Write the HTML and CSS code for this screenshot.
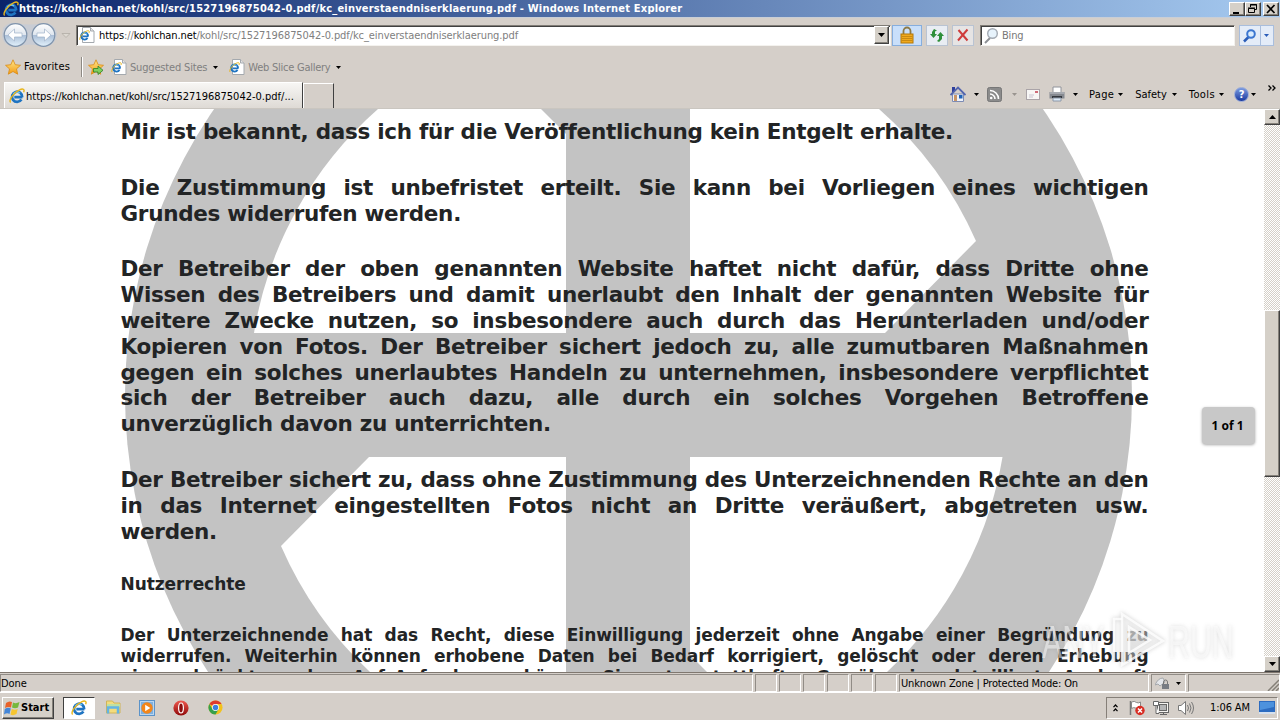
FILE: index.html
```html
<!DOCTYPE html>
<html lang="de">
<head>
<meta charset="utf-8">
<title>kc_einverstaendniserklaerung.pdf - Windows Internet Explorer</title>
<link rel="stylesheet" href="styles.css">
</head>
<body>
<svg class="defs" width="0" height="0" aria-hidden="true">
  <defs>
    <linearGradient id="gball" x1="0" y1="0" x2="0" y2="1"><stop offset="0" stop-color="#fff"/><stop offset=".48" stop-color="#dfe6ee"/><stop offset=".5" stop-color="#a9bdd6"/><stop offset="1" stop-color="#e2f1fb"/></linearGradient>
    <linearGradient id="gstar" x1="0" y1="0" x2="0" y2="1"><stop offset="0" stop-color="#ffe88a"/><stop offset="1" stop-color="#f39a12"/></linearGradient>
    <linearGradient id="gred" x1="0" y1="0" x2="0" y2="1"><stop offset="0" stop-color="#ef5a50"/><stop offset="1" stop-color="#8f0808"/></linearGradient>
    <symbol id="e" viewBox="0 0 16 16">
      <path d="M13.4 9.2H5.3M13.2 9.2A5.1 5.1 0 1 0 12.4 11.6" fill="none" stroke="#1f74c2" stroke-width="2.7"/>
      <path d="M4.2 6.2A4.6 4.6 0 0 1 11 5" fill="none" stroke="#6cc3f2" stroke-width="1.3"/>
      <path d="M1.6 14.6C-.6 12.500 4.500 4.500 10.500 1.800C14 .2 16 1.200 14.600 4.300" fill="none" stroke="#e8b61c" stroke-width="1.400"/>
    </symbol>
    <symbol id="epage" viewBox="0 0 16 16">
      <path d="M3.500.5h8l3.500 3.500v11.500H3.500z" fill="#fff" stroke="#a4a9ae"/>
      <path d="M11.500.5V4H15" fill="#e4e4e4" stroke="#a4a9ae"/>
      <use href="#e" x="0" y="3" width="11" height="11"/>
    </symbol>
    <symbol id="star" viewBox="0 0 16 16"><path d="M8 .8l2.200 4.900 5.300.6-4 3.600 1.200 5.300L8 12.500l-4.700 2.700 1.200-5.300-4-3.600 5.300-.6z" fill="url(#gstar)" stroke="#d98a14" stroke-width=".8"/></symbol>
    <symbol id="down" viewBox="0 0 5 3"><path d="M0 0h5L2.500 3z" fill="currentColor"/></symbol>
  </defs>
</svg>

<div class="window">
  <header class="titlebar">
    <svg class="i16"><use href="#e"/></svg>
    <span class="title">https://kohlchan.net/kohl/src/1527196875042-0.pdf/kc_einverstaendniserklaerung.pdf - Windows Internet Explorer</span>
    <div class="winbtns">
      <span class="btn3d"><svg width="14" height="12"><path d="M3 9h6v2H3z"/></svg></span>
      <span class="btn3d"><svg width="14" height="12" fill="none" stroke="#000"><path d="M4.500 4V1.500h6v5H9M4 2h7"/><path d="M2.500 5.500h6v4h-6zM2 5h7"/></svg></span>
      <span class="btn3d close"><svg width="14" height="12"><path d="M3 2l7.500 8M10.500 2L3 10" stroke="#000" stroke-width="1.700"/></svg></span>
    </div>
  </header>

  <div class="address">
    <svg class="nav" width="74" height="28" viewBox="0 0 74 28">
      <path d="M3 7Q8 1 16 2Q29 5 44 2Q54 2 57 12Q56 25 44 26Q30 21 16 26Q3 25 2 15z" fill="#c8ccd4"/>
      <g fill="url(#gball)" stroke="#7f93ab" stroke-width="1.200"><circle cx="15.500" cy="14" r="11.300"/><circle cx="43.500" cy="14" r="11.300"/></g>
      <path d="M8 14l6.500-6v4H22v4h-7.500v4z" fill="#fff" stroke="#9fb1c8" stroke-width=".7"/>
      <path d="M51 14l-6.500-6v4H37v4h7.500v4z" fill="#fff" stroke="#9fb1c8" stroke-width=".7"/>
      <path d="M62 12.500h8l-4 4z" fill="#ddd9d2" stroke="#b1aca5" stroke-width=".8"/>
    </svg>
    <div class="url sunken">
      <svg class="i16"><use href="#epage"/></svg>
      <span class="urltext"><b>https</b>://<b>kohlchan.net</b>/kohl/src/1527196875042-0.pdf/kc_einverstaendniserklaerung.pdf</span>
      <span class="btn3d drop"><svg width="7" height="4"><path d="M0 0h7L3.500 4z"/></svg></span>
    </div>
    <span class="flat lock"><svg width="16" height="18"><path d="M4.500 9V5a3.500 3.500 0 0 1 7 0v4" fill="none" stroke="#8c7a48" stroke-width="1.800"/><rect x="2" y="8" width="12" height="9" fill="#f0a91e" stroke="#b47808"/><path d="M2.500 10.500h11M2.500 12.500h11M2.500 14.500h11" stroke="#c98a12"/></svg></span>
    <span class="flat"><svg width="16" height="16" fill="#2f8f3a"><path d="M5 2l3 1.500-2 1V7h2L4.500 11 1 7h2V5z"/><path d="M11.500 5l3.500 4h-2v3l-3 3-2-1 2-2V9H8z"/></svg></span>
    <span class="flat stop"><svg width="16" height="16"><path d="M3.500 3l9 10.500M12.500 2.500l-9.500 11" stroke="#cf3b3b" stroke-width="2"/></svg></span>
    <div class="search sunken">
      <svg width="17" height="17" fill="none"><path d="M7 11l-5 5" stroke="#8d9095" stroke-width="2"/><circle cx="9.500" cy="6.500" r="4.800" fill="#e7f3fc" stroke="#a3aab3" stroke-width="1.400"/></svg>
      <span>Bing</span>
    </div>
    <span class="go">
      <svg width="20" height="19" fill="none"><path d="M8.500 11L4 15.500" stroke="#2a5cb8" stroke-width="2.500"/><circle cx="11" cy="8" r="3.800" fill="#d9ecff" stroke="#3c76d0" stroke-width="2"/></svg>
      <svg class="gd" width="13" height="19"><path d="M3 8h5L5.500 11z" fill="#2a5cb8"/></svg>
    </span>
  </div>

  <div class="favbar">
    <svg class="i16"><use href="#star"/></svg><span class="favs">Favorites</span>
    <i class="sep"></i>
    <svg class="i16 add" viewBox="0 0 16 16"><use href="#star"/><path d="M5.500 9.500H10V7l5 4.300-5 4.200V13H5.500z" fill="#7fd05f" stroke="#2b7f27" stroke-width=".8"/></svg>
    <svg class="i16 p1"><use href="#epage"/></svg><span class="grey sug">Suggested Sites</span><svg class="dn"><use href="#down"/></svg>
    <svg class="i16 p2"><use href="#epage"/></svg><span class="grey gal">Web Slice Gallery</span><svg class="dn"><use href="#down"/></svg>
  </div>

  <div class="tabrow">
    <div class="tab"><svg class="i16"><use href="#e"/></svg><span>https://kohlchan.net/kohl/src/1527196875042-0.pdf/...</span></div>
    <div class="newtab"></div>
    <div class="cmds">
      <svg class="home" width="16" height="17"><path d="M2.500 8h11v7.500h-11z" fill="#eef2fa" stroke="#7d8bb4"/><path d="M2 1h3v5H2z" fill="#2e3f9c"/><path d="M.5 9L8 1.500 15.500 9" fill="none" stroke="#5265ae" stroke-width="1.800"/><path d="M4 9h3v6H4z" fill="#c99667"/><path d="M9 9h3.500v3.500H9z" fill="#1f63b8"/></svg>
      <svg class="dn d1"><use href="#down"/></svg>
      <svg class="rss" width="15" height="15"><rect x=".5" y=".5" width="14" height="14" rx="2" fill="#8b8b8b" stroke="#777"/><g fill="none" stroke="#fff" stroke-width="1.600"><path d="M3 7a5 5 0 0 1 5 5M3 3.500A8.500 8.500 0 0 1 11.500 12"/></g><circle cx="4.200" cy="11" r="1.300" fill="#fff"/></svg>
      <svg class="dn d2"><use href="#down"/></svg>
      <svg class="mail" width="14" height="11"><rect x=".5" y=".5" width="13" height="10" fill="#f7f6f5" stroke="#aaa4a8"/><path d="M3 6h5M3 8h4" stroke="#c9c4d1"/><path d="M9 2h3v2H9z" fill="#cf6b78"/></svg>
      <svg class="print" width="16" height="16"><path d="M4 1h8v6H4z" fill="#fff" stroke="#90939a"/><path d="M.5 6h15v6.500H.5z" fill="#858990"/><path d="M1 7h14" stroke="#c7cad0"/><path d="M3 10h10v2H3z" fill="#34383e"/><path d="M4 12h8v3H4z" fill="#dceaf7" stroke="#8d98a8"/></svg>
      <svg class="dn d3"><use href="#down"/></svg>
      <span class="c1">Page</span><svg class="dn"><use href="#down"/></svg>
      <span class="c2">Safety</span><svg class="dn"><use href="#down"/></svg>
      <span class="c3">Tools</span><svg class="dn"><use href="#down"/></svg>
      <span class="help">?</span><svg class="dn d4"><use href="#down"/></svg>
      <svg class="more" width="8" height="6" fill="none" stroke="#000" stroke-width="1.300"><path d="M.5.5L3 3 .5 5.500M4.500.5L7 3 4.500 5.500"/></svg>
    </div>
  </div>

  <main class="view">
    <div class="page">
      <svg class="emblem" width="1264" height="563" viewBox="0 109 1264 563">
        <circle cx="628.500" cy="395" r="503.500" fill="#c3c3c3"/>
        <g fill="#fff">
          <path d="M378 109A380 380 0 0 0 254 333H566V134L541 109z"/>
          <path d="M690 109H879A380 380 0 0 1 976 241L885 333H690z"/>
          <path d="M369 457H566V672H370A380 380 0 0 1 281 546z"/>
          <path d="M690 457H1002.500A380 380 0 0 1 887 672H707L690 655z"/>
        </g>
      </svg>
      <article class="doc">
        <p><span class="end">Mir ist bekannt, dass ich für die Veröffentlichung kein Entgelt erhalte.</span></p>
        <p><span>Die Zustimmung ist unbefristet erteilt. Sie kann bei Vorliegen eines wichtigen</span><span class="end">Grundes widerrufen werden.</span></p>
        <p><span>Der Betreiber der oben genannten Website haftet nicht dafür, dass Dritte ohne</span><span>Wissen des Betreibers und damit unerlaubt den Inhalt der genannten Website für</span><span>weitere Zwecke nutzen, so insbesondere auch durch das Herunterladen und/oder</span><span>Kopieren von Fotos. Der Betreiber sichert jedoch zu, alle zumutbaren Maßnahmen</span><span>gegen ein solches unerlaubtes Handeln zu unternehmen, insbesondere verpflichtet</span><span>sich der Betreiber auch dazu, alle durch ein solches Vorgehen Betroffene</span><span class="end">unverzüglich davon zu unterrichten.</span></p>
        <p><span>Der Betreiber sichert zu, dass ohne Zustimmung des Unterzeichnenden Rechte an den</span><span>in das Internet eingestellten Fotos nicht an Dritte veräußert, abgetreten usw.</span><span class="end">werden.</span></p>
        <h2>Nutzerrechte</h2>
        <p class="small"><span>Der Unterzeichnende hat das Recht, diese Einwilligung jederzeit ohne Angabe einer Begründung zu</span><span>widerrufen. Weiterhin können erhobene Daten bei Bedarf korrigiert, gelöscht oder deren Erhebung</span><span>eingeschränkt werden. Auf Anforderung können Sie unter statthafter Gewähr eine detaillierte Auskunft</span></p>
      </article>
      <div class="pager">1 of 1</div>
      <div class="mark"><span>ANY</span><svg width="56" height="60" fill="rgba(255,255,255,.35)" stroke="#fff" stroke-opacity=".8" stroke-width="2.500"><path d="M12 4L53 31 12 55z"/><path d="M19 17L40 30 19 43z" fill="rgba(225,225,225,.45)"/><path d="M12 9H4v42" fill="none"/></svg><span>RUN</span></div>
    </div>
    <div class="scroll">
      <span class="btn3d sb"><svg width="7" height="4"><path d="M0 4h7L3.500 0z"/></svg></span>
      <span class="thumb btn3d"></span>
      <span class="btn3d sb"><svg width="7" height="4"><path d="M0 0h7L3.500 4z"/></svg></span>
    </div>
  </main>

  <footer class="status">
    <span class="cell done">Done</span>
    <span class="cell s"></span><span class="cell s"></span><span class="cell s"></span><span class="cell s"></span><span class="cell s"></span><span class="cell s"></span>
    <span class="cell zone">Unknown Zone | Protected Mode: On</span>
    <span class="cell filter"><svg width="17" height="15"><path d="M0 9Q3 2 8 2l2 4-5 4-2-2z" fill="#e4e6ea" stroke="#a5a8ac"/><path d="M8.500 8V6a2 2 0 0 1 4 0v2" fill="none" stroke="#777"/><path d="M7 8h7v5H7z" fill="#777b82"/></svg><svg class="dn"><use href="#down"/></svg></span>
    <span class="cell last"><svg width="12" height="12" stroke="#858078" stroke-width="1.500"><path d="M1 12L12 1M5 12l7-7M9 12l3-3"/></svg></span>
  </footer>

  <footer class="taskbar">
    <span class="start btn3d"><svg width="17" height="16"><path d="M2 3Q5 .5 8 2L7 7.500Q4 6.500 1 8z" fill="#e8622a"/><path d="M9 2.500Q12 4 15.500 2L14 7.500Q11 9 8 7.500z" fill="#76b83c"/><path d="M.8 9Q4 7 6.800 8.500L5.500 14Q3 12.500 0 14.500z" fill="#4486d8"/><path d="M7.800 9Q11 10.500 13.700 9L12.500 14Q9 16 6.500 14.500z" fill="#f6c530"/></svg>Start</span>
    <span class="task"><svg width="16" height="16"><use href="#e"/></svg></span>
    <svg class="q1" width="17" height="17"><path d="M1.500 2h6l1.500 2h6v10h-13.500z" fill="#f3dc7c" stroke="#d0b458"/><path d="M2 5h13v3H2z" fill="#bfe0a3"/><path d="M3 14.500V8.500h10v6" fill="none" stroke="#63b4e4" stroke-width="2.500"/></svg>
    <svg class="q2" width="16" height="16"><rect x=".5" y=".5" width="15" height="15" fill="#b9d6f1" stroke="#5b93c9"/><rect x="2" y="2" width="12" height="12" fill="#7fb0de"/><circle cx="8" cy="8" r="5.700" fill="#f3861a"/><path d="M6.200 4.700L11.300 8l-5.100 3.300z" fill="#fff"/></svg>
    <svg class="q3" width="16" height="16"><circle cx="8" cy="8" r="7.600" fill="url(#gred)"/><ellipse cx="8" cy="8" rx="2.400" ry="5" fill="#8c0d0d" stroke="#fff" stroke-width="1.200"/></svg>
    <svg class="q4" width="15" height="15" viewBox="0 0 16 16"><circle cx="8" cy="8" r="7.500" fill="#f2c21c"/><path d="M8 8L1.500 4.250A7.500 7.500 0 0 1 14.500 4.250H8z" fill="#df3a2e"/><path d="M1.500 4.250A7.500 7.500 0 0 0 8 15.500L11.300 9.800 8 8 4.700 9.800z" fill="#36a04c"/><circle cx="8" cy="8" r="3.700" fill="#fff"/><circle cx="8" cy="8" r="2.900" fill="#3d7fe0"/></svg>
    <div class="tray">
      <svg width="5" height="8" fill="none" stroke="#000" stroke-width="1.200"><path d="M.5 3.200L2.500 1l2 2.200M.5 7.200L2.500 5l2 2.200"/></svg>
      <svg class="t1" width="16" height="16"><path d="M1.500 1v14" stroke="#777" stroke-width="1.500"/><path d="M2.500 2q3-1.500 5 .5 2 1 4-.5v6q-3 1.500-5 0-2-1-4 .5z" fill="#fff" stroke="#888"/><circle cx="11" cy="10.500" r="4.700" fill="#d82c22"/><path d="M9 8.500l4 4M13 8.500l-4 4" stroke="#fff" stroke-width="1.500"/></svg>
      <svg class="t2" width="16" height="16" fill="#f4f3f0" stroke="#666"><rect x="4.500" y="2.500" width="11" height="10"/><rect x="6.500" y="4.500" width="7" height="6" fill="#b4b5b6"/><path d="M7 14.500h7M10.500 13v1"/><path d="M.5 1.500h5v4h-5zM3 5v8.500h3" fill="#fff"/></svg>
      <svg class="t3" width="17" height="16" fill="none" stroke="#777"><path d="M1.500 5.500H4L8.500 1.500v13L4 10.500H1.500z" fill="#fff"/><path d="M10.500 5q2 3 0 6M12.500 3.500q3 4.500 0 9M14.500 2q4 6 0 12"/></svg>
      <span class="time">1:06 AM</span>
      <svg class="t4" width="16" height="13"><path d="M0 0h16v11H0z" fill="#2d6cc0"/><path d="M1 1h14v5L1 9z" fill="#4d92dd"/><path d="M0 11h16v2H0z" fill="#d5e0ee"/></svg>
    </div>
  </footer>
</div>
</body>
</html>
```
FILE: styles.css
```css
* { box-sizing: border-box; }
body { margin: 0; background: #d5d0c8; overflow: hidden; }
svg { display: block; flex: none; }
.defs { position: absolute; }
.window {
  display: flex; flex-direction: column; width: 1280px; height: 720px;
  font: 11px/14px "DejaVu Sans Condensed", "Liberation Sans", sans-serif; color: #000;
  background: #d5cfc9; white-space: nowrap;
}
.i16 { width: 16px; height: 16px; }
.btn3d {
  display: flex; align-items: center; justify-content: center; background: #d5d0c8;
  border: 1px solid; border-color: #fff #404040 #404040 #fff; box-shadow: inset -1px -1px #85817a;
}
.sunken { background: #fff; border: 1px solid; border-color: #807c76 #f4f2ee #f4f2ee #807c76; box-shadow: inset 1px 1px #404040; }

.titlebar { display: flex; align-items: center; height: 18px; padding: 0 1px 0 3px; background: linear-gradient(90deg, #0a246a, #a6caf0); border-bottom: 1px solid #c9ced6; color: #fff; }
.title { margin-left: 0; padding-top: 1px; font-weight: bold; letter-spacing: .2px; }
.winbtns { display: flex; margin-left: auto; }
.winbtns .btn3d { width: 16px; height: 14px; }
.winbtns .close { margin-left: 2px; }

.address { display: flex; align-items: center; height: 34px; }
.nav { margin-right: 2px; }
.url { display: flex; align-items: center; width: 815px; height: 21px; padding: 1px; }
.urltext { margin-left: 4px; padding-top: 2px; color: #808080; letter-spacing: -.09px; }
.url .i16 { margin-left: 1px; }
.urltext b { font-weight: normal; color: #000; }
.drop { width: 15px; height: 18px; margin-left: auto; }
.flat { display: flex; align-items: center; justify-content: center; width: 22px; height: 21px; margin-left: 4px; background: #e9edf3; border: 1px solid #b9c3d2; }
.flat.lock { width: 30px; margin-left: 1px; background: #c9dffa; border-color: #86aede; }
.flat.stop { background: #e6e4e4; }
.search { display: flex; align-items: center; width: 255px; height: 21px; margin-left: 6px; padding-left: 2px; color: #777; }
.search span { margin-left: 2px; padding-top: 2px; letter-spacing: -.2px; }
.go { display: flex; width: 35px; height: 21px; margin-left: 4px; background: #e4ecf8; border: 1px solid #a9bedd; }
.gd { border-left: 1px solid #a9bedd; }

.favbar { display: flex; align-items: center; height: 30px; padding-left: 5px; }
.favs { margin-left: 3px; letter-spacing: .15px; }
.sep { width: 2px; height: 20px; margin: 0 4px 0 11px; border-left: 1px solid #8d8983; border-right: 1px solid #fff; }
.add { margin-left: 1px; }
.p1 { margin-left: 7px; }
.p2 { margin-left: 11px; }
.grey { margin-left: 3px; padding-top: 2px; color: #808080; }
.sug { letter-spacing: -.17px; }
.gal { letter-spacing: -.25px; }
.dn { width: 5px; height: 3px; margin-left: 6px; }

.tabrow { display: flex; height: 27px; align-items: flex-end; border-bottom: 1px solid #cac6c0; }
.tab { display: flex; align-items: center; width: 299px; height: 26px; margin-left: 4px; padding-left: 4px; background: linear-gradient(#f7f6f4, #dedad5); border: solid; border-width: 1px 1px 0; border-color: #fff #404040 #fff #fff; }
.tab span { margin-left: 1px; padding-top: 2px; }
.newtab { width: 31px; height: 25px; border: solid; border-width: 1px 1px 0 1px; border-color: #fff #404040 #fff #fff; }
.cmds { display: flex; align-items: center; height: 26px; margin-left: auto; padding: 0 4px 2px 0; }
.cmds span { padding-top: 1px; }
.d1 { margin-left: 8px; }
.rss { margin-left: 8px; }
.d2 { margin-left: 10px; color: #99948f; }
.mail { margin-left: 9px; }
.print { margin-left: 9px; }
.d3 { margin-left: 8px; }
.c1 { margin-left: 11px; letter-spacing: .3px; }
.c1 + .dn, .c3 + .dn { margin-left: 4px; }
.c2 { margin-left: 12px; }
.c2 + .dn { margin-left: 5px; }
.c3 { margin-left: 12px; letter-spacing: .4px; }
.cmds .help { width: 15px; height: 15px; margin-left: 10px; padding: 0; border: 1px solid #9aabd8; border-radius: 50%; background: linear-gradient(#7b9be0, #1a3aa0); color: #fff; font-weight: bold; line-height: 13px; text-align: center; }
.d4 { margin-left: 2px; }
.more { align-self: flex-start; margin: 3px 0 0 12px; }

.view { display: flex; height: 563px; }
.page { position: relative; width: 1264px; height: 563px; overflow: hidden; background: #fff; }
.emblem { position: absolute; left: 0; top: 0; }
.doc { position: relative; width: 1028px; margin-left: 120.500px; padding-top: 10px; color: #222425; font: bold 21.500px/25.860px "DejaVu Sans", sans-serif; letter-spacing: -.29px; }
.doc p { margin: 0 0 29.800px; }
.doc span { display: block; text-align: justify; text-align-last: justify; }
.doc span.end { text-align-last: left; }
.doc h2 { margin: 0 0 30px; font-size: 17px; line-height: 21px; letter-spacing: -.07px; }
.doc p.small { font-size: 17px; line-height: 21px; letter-spacing: -.07px; }
.pager { position: absolute; left: 1202px; top: 298px; width: 53px; height: 37px; border-radius: 4px; background: #c8c8c8; box-shadow: 0 1px 3px rgba(0, 0, 0, .35); font: bold 12px/37px "Noto Sans", sans-serif; text-align: center; text-indent: -2px; }
.mark { position: absolute; left: 1042px; top: 499px; display: flex; align-items: center; color: rgba(255, 255, 255, .5); font: 46px/60px "Liberation Sans", sans-serif; filter: drop-shadow(0 0 2px rgba(100, 100, 100, .4)); }
.mark span { width: 68px; padding-top: 4px; transform: scaleX(.66); transform-origin: left; }
.mark svg { margin-right: 2px; }

.scroll { display: flex; flex-direction: column; width: 16px; height: 563px; background: repeating-conic-gradient(#fff 0 25%, #d5d0c8 0 50%) 0 0 / 2px 2px; }
.sb { height: 16px; }
.thumb { height: 167px; margin: 185px 0 179px; }

.status { display: flex; height: 20px; padding-top: 1px; border-top: 1px solid #807870; }
.cell { height: 18px; margin-right: 2px; padding-left: 1px; border: 1px solid; border-color: #918c86 #fff #fff #918c86; line-height: 17px; }
.done { width: 753px; padding-left: 0; letter-spacing: -.1px; }
.s { width: 22px; }
.zone { width: 250px; padding-left: 1px; letter-spacing: -.15px; }
.filter { display: flex; align-items: center; width: 35px; padding-left: 3px; }
.filter .dn { margin-left: 4px; }
.last { display: flex; flex: 1; align-items: flex-end; justify-content: flex-end; margin: 0; }

.taskbar { display: flex; align-items: center; height: 28px; padding: 2px 2px 0; border-top: 1px solid #fff; }
.start { width: 52px; height: 22px; justify-content: flex-start; padding-left: 1px; font-weight: bold; }
.task { display: flex; align-items: center; justify-content: center; width: 32px; height: 22px; margin-left: 9px; background: #fff; border: 1px solid; border-color: #404040 #fff #fff #404040; }
.q1 { margin-left: 10px; }
.q2 { margin-left: 17px; }
.q3 { margin-left: 18px; }
.q4 { margin-left: 19px; }
.tray { display: flex; align-items: center; width: 172px; height: 22px; margin-left: auto; padding-left: 6px; border: 1px solid; border-color: #857f78 #fff #fff #857f78; }
.t1 { margin-left: 11px; }
.t2 { margin-left: 8px; }
.t3 { margin-left: 8px; }
.time { margin-left: 16px; letter-spacing: -.1px; }
.t4 { margin-left: auto; margin-right: 2px; }
```
